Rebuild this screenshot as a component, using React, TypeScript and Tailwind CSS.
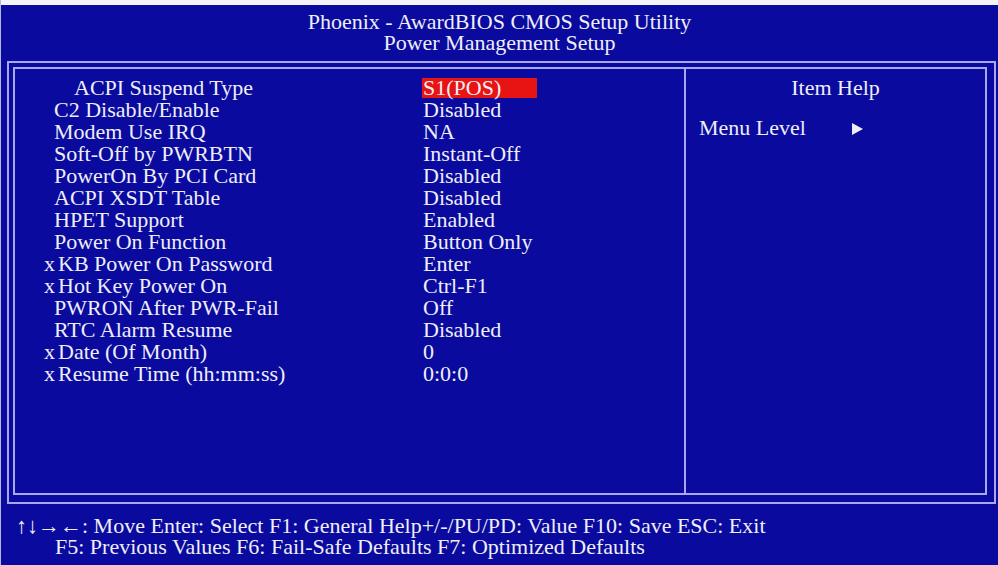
import React from "react";

type Row = { label: string; value: string; x?: boolean; first?: boolean };

const rows: Row[] = [
  { label: "ACPI Suspend Type", value: "S1(POS)", first: true },
  { label: "C2 Disable/Enable", value: "Disabled" },
  { label: "Modem Use IRQ", value: "NA" },
  { label: "Soft-Off by PWRBTN", value: "Instant-Off" },
  { label: "PowerOn By PCI Card", value: "Disabled" },
  { label: "ACPI XSDT Table", value: "Disabled" },
  { label: "HPET Support", value: "Enabled" },
  { label: "Power On Function", value: "Button Only" },
  { label: "KB Power On Password", value: "Enter", x: true },
  { label: "Hot Key Power On", value: "Ctrl-F1", x: true },
  { label: "PWRON After PWR-Fail", value: "Off" },
  { label: "RTC Alarm Resume", value: "Disabled" },
  { label: "Date (Of Month)", value: "0", x: true },
  { label: "Resume Time (hh:mm:ss)", value: "0:0:0", x: true },
];

export default function App() {
  return (
    <div
      className="w-[998px] h-[565px] overflow-hidden bg-[#0a0a9e] text-[#eeeef6] flex flex-col border-l border-[#b8b8e8]"
      style={{ fontFamily: '"Liberation Serif", "Times New Roman", serif' }}
    >
      <div className="h-[5px] bg-[#f4f4f8] -ml-px" />
      <div className="h-[56px] pt-[6px] text-[22px] leading-[21px] text-center flex flex-col items-center">
        <div>Phoenix - AwardBIOS CMOS Setup Utility</div>
        <div>Power Management Setup</div>
      </div>
      <div className="ml-[6px] w-[989px] h-[443px] border-2 border-[#a8a8f0] pt-[4px] pl-[4px] pr-[7px] pb-[7px] flex">
        <div className="flex-1 border-2 border-[#a8a8f0] flex">
          <div className="w-[671px] border-r-2 border-[#a8a8f0] pt-[8px] text-[22px] leading-[22px]">
            {rows.map((r) => (
              <div key={r.label} className="flex h-[22px] whitespace-nowrap">
                <div className="w-[408px] flex">
                  {r.first ? (
                    <span className="pl-[59px]">{r.label}</span>
                  ) : r.x ? (
                    <>
                      <span className="pl-[29px] w-[43px]">x</span>
                      <span>{r.label}</span>
                    </>
                  ) : (
                    <span className="pl-[39px]">{r.label}</span>
                  )}
                </div>
                {r.first ? (
                  <span className="inline-block w-[115px] h-[20px] mt-px bg-[#e81414] leading-[20px] -ml-px pl-px">
                    {r.value}
                  </span>
                ) : (
                  <span>{r.value}</span>
                )}
              </div>
            ))}
          </div>
          <div className="flex-1 pt-[8px] text-[22px] leading-[22px]">
            <div className="text-center h-[22px]">Item Help</div>
            <div className="flex items-center mt-[18px] h-[22px] pl-[13px]">
              <span className="w-[153px]">Menu Level</span>
              <svg width="11" height="12" viewBox="0 0 11 12" className="mt-px">
                <polygon points="0,0 11,6 0,12" fill="#eeeef6" />
              </svg>
            </div>
          </div>
        </div>
      </div>
      <div className="pt-[11px] text-[22px] leading-[21px] whitespace-nowrap">
        <div className="pl-[15px]">
          ↑↓→←: Move Enter: Select F1: General Help+/-/PU/PD: Value F10: Save ESC: Exit
        </div>
        <div className="pl-[54px]">
          F5: Previous Values F6: Fail-Safe Defaults F7: Optimized Defaults
        </div>
      </div>
    </div>
  );
}
